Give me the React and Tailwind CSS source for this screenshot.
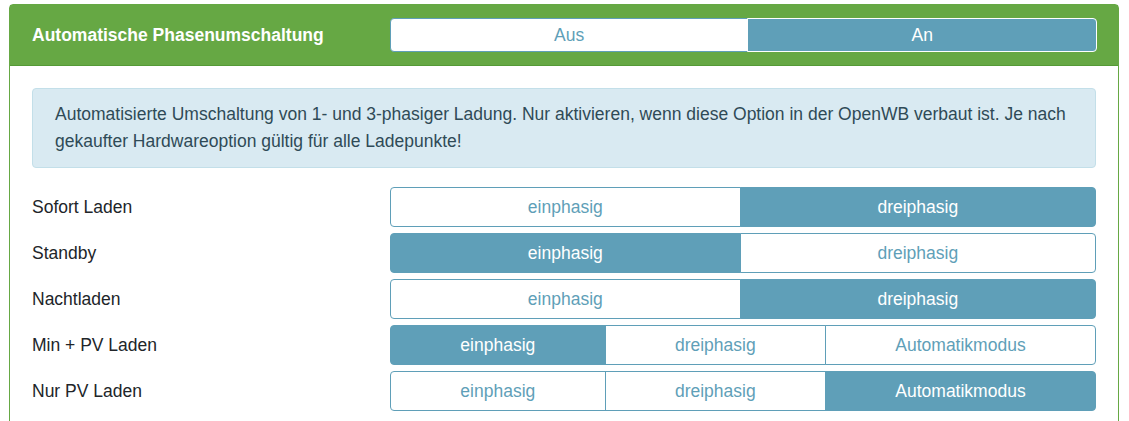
import React from "react";

const rows = [
  { label: "Sofort Laden", options: ["einphasig", "dreiphasig"], active: 1 },
  { label: "Standby", options: ["einphasig", "dreiphasig"], active: 0 },
  { label: "Nachtladen", options: ["einphasig", "dreiphasig"], active: 1 },
  { label: "Min + PV Laden", options: ["einphasig", "dreiphasig", "Automatikmodus"], active: 0 },
  { label: "Nur PV Laden", options: ["einphasig", "dreiphasig", "Automatikmodus"], active: 2 },
];

function ButtonGroup({ options, active, light }) {
  return (
    <div className="flex w-full">
      {options.map((opt, i) => {
        const first = i === 0;
        const last = i === options.length - 1;
        return (
          <button
            key={opt}
            className={`flex-auto border ${light ? "h-[34px]" : "h-[40px]"} px-3 text-[17.5px] ${
              first ? "rounded-l-[4px]" : "-ml-px"
            } ${last ? "rounded-r-[4px]" : ""} ${
              i === active
                ? `bg-[#5f9fb8] text-white ${light ? "border-white" : "border-[#5f9fb8]"}`
                : "bg-white text-[#5f9fb8] border-[#5f9fb8]"
            }`}
          >
            {opt}
          </button>
        );
      })}
    </div>
  );
}

export default function App() {
  return (
    <div className="bg-white w-[1129px] h-[421px] overflow-hidden pt-[4px] pl-[9px] pr-[10px] font-['Liberation_Sans',Arial,sans-serif]">
      <div className="border border-[#66a844] rounded-t-[4px] h-[430px]">
        <div className="bg-[#66a844] border-b border-[#559a36] flex items-center h-[61px] pl-[22px] pr-[21px]">
          <div className="w-[358px] text-white font-bold text-[17.5px]">Automatische Phasenumschaltung</div>
          <div className="flex-1">
            <ButtonGroup options={["Aus", "An"]} active={1} light />
          </div>
        </div>
        <div className="px-[22px] pt-[22px]">
          <div className="bg-[#d9eaf2] border border-[#c3dfe9] rounded-[4px] px-[22px] py-[12px] text-[17.5px] leading-[27px] text-[#2f4a57] mb-[19px]">
            Automatisierte Umschaltung von 1- und 3-phasiger Ladung. Nur aktivieren, wenn diese Option in der OpenWB verbaut ist. Je nach gekaufter Hardwareoption gültig für alle Ladepunkte!
          </div>
          <div className="flex flex-col gap-[6px]">
            {rows.map((row) => (
              <div key={row.label} className="flex items-center">
                <div className="w-[358px] text-[17.5px] text-[#212529]">{row.label}</div>
                <div className="flex-1">
                  <ButtonGroup options={row.options} active={row.active} />
                </div>
              </div>
            ))}
          </div>
        </div>
      </div>
    </div>
  );
}
